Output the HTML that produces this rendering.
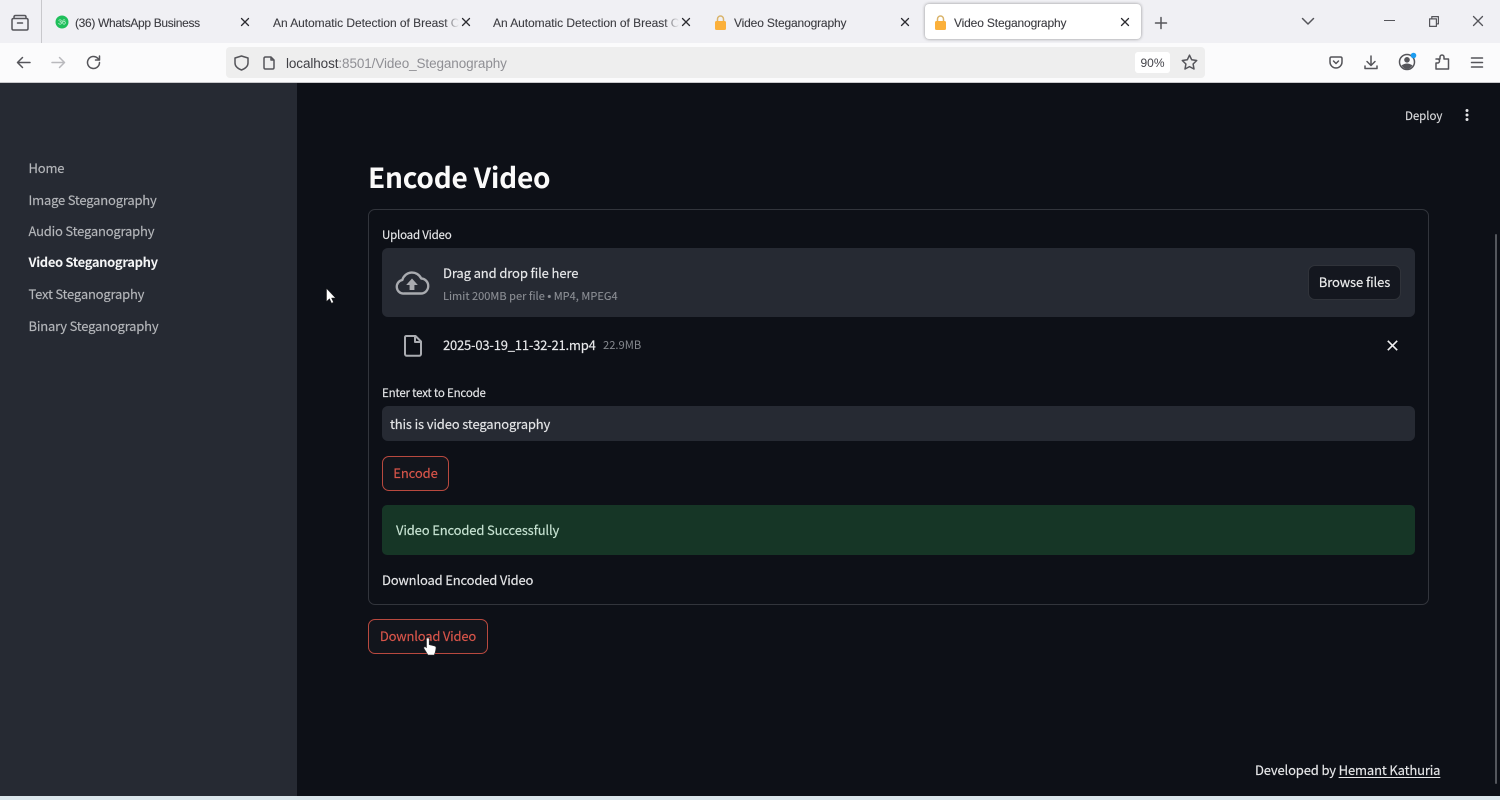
<!DOCTYPE html>
<html lang="en">
<head>
<meta charset="utf-8">
<title>Video Steganography</title>
<style>
html,body{margin:0;padding:0;width:1500px;height:800px;overflow:hidden;background:#0d1017}
body{position:relative;font-family:"Noto Sans CJK SC","Liberation Sans",sans-serif}
#w{position:absolute;left:0;top:0;width:1500px;height:800px;overflow:hidden;filter:blur(.3px)}
.a{position:absolute;white-space:nowrap}
.t{height:20px;line-height:20px}
.s{font-size:13px;letter-spacing:-.15px;-webkit-text-stroke:.15px currentColor}
.l{font-size:11.5px;letter-spacing:-.2px;-webkit-text-stroke:.15px currentColor}
.b{font-family:"Liberation Sans",sans-serif;font-size:12px;color:#3b3b40;top:13px;-webkit-text-stroke:.1px currentColor}
svg{position:absolute;overflow:visible}
.nav{left:28.500px;font-size:13px;letter-spacing:-.2px;color:#b4b6ba;-webkit-text-stroke:.15px currentColor}
.i{fill:none;stroke:#55555a;stroke-width:1.500;stroke-linecap:round;stroke-linejoin:round}
.x{fill:none;stroke:#2b2b30;stroke-width:1.300;stroke-linecap:round}
.btn{box-sizing:border-box;background:#12151c;border:1px solid #b8493f;border-radius:7px;text-align:center;line-height:32px;color:#d8554a}
</style>
</head>
<body>
<div id="w">
<!-- browser chrome -->
<div class="a" style="left:0;top:0;width:1500px;height:43px;background:#f0f0f4"></div>
<div class="a" style="left:0;top:43px;width:1500px;height:39px;background:#fbfbfc"></div>
<div class="a" style="left:0;top:82px;width:1500px;height:1px;background:#c9c9cc"></div>
<div class="a" style="left:41px;top:0;width:1px;height:43px;background:#c8c8cc"></div>

<svg style="left:11px;top:14px" width="18" height="18" viewBox="0 0 18 18"><path class="i" d="M3 4.500V3q0-1.500 1.500-1.500h9Q15 1.500 15 3v1.500M2.500 4.500h13Q17 4.500 17 6v8.500q0 1.500-1.500 1.500h-13Q1 16 1 14.500V6q0-1.500 1.500-1.500zM6.500 9h5"/></svg>

<svg style="left:55px;top:15px" width="14" height="14" viewBox="0 0 14 14"><circle cx="7" cy="7" r="6.500" fill="#1fbf5b"/><text x="7" y="9.500" font-size="7" text-anchor="middle" fill="#dff8e8" font-family="Liberation Sans">36</text></svg>
<div class="a t b" style="left:75px;letter-spacing:-.33px">(36) WhatsApp Business</div>
<svg style="left:241px;top:18px" width="8" height="8" viewBox="0 0 8 8"><path class="x" d="M.5.500l7 7M7.500.500l-7 7"/></svg>

<div class="a t b" style="left:273px;letter-spacing:-.05px;width:186px;overflow:hidden;-webkit-mask-image:linear-gradient(90deg,#000 92%,transparent)">An Automatic Detection of Breast Cancer</div>
<svg style="left:462px;top:18px" width="8" height="8" viewBox="0 0 8 8"><path class="x" d="M.5.500l7 7M7.500.500l-7 7"/></svg>

<div class="a t b" style="left:493px;letter-spacing:-.05px;width:186px;overflow:hidden;-webkit-mask-image:linear-gradient(90deg,#000 92%,transparent)">An Automatic Detection of Breast Cancer</div>
<svg style="left:682px;top:18px" width="8" height="8" viewBox="0 0 8 8"><path class="x" d="M.5.500l7 7M7.500.500l-7 7"/></svg>

<svg style="left:714px;top:15px" width="13" height="15" viewBox="0 0 13 15"><path d="M3.500 7V4a3 3 0 0 1 6 0v3" fill="none" stroke="#d9b36a" stroke-width="1.500"/><rect x="1" y="6" width="11" height="9" rx="1.500" fill="#fbb03b"/></svg>
<div class="a t b" style="left:734px;letter-spacing:-.15px">Video Steganography</div>
<svg style="left:901px;top:18px" width="8" height="8" viewBox="0 0 8 8"><path class="x" d="M.5.500l7 7M7.500.500l-7 7"/></svg>

<div class="a" style="left:925px;top:4px;width:216px;height:35px;background:#fff;border-radius:4px;box-shadow:0 0 3px rgba(0,0,0,.4)"></div>
<svg style="left:934px;top:15px" width="13" height="15" viewBox="0 0 13 15"><path d="M3.500 7V4a3 3 0 0 1 6 0v3" fill="none" stroke="#d9b36a" stroke-width="1.500"/><rect x="1" y="6" width="11" height="9" rx="1.500" fill="#fbb03b"/></svg>
<div class="a t b" style="left:954px;letter-spacing:-.15px">Video Steganography</div>
<svg style="left:1121px;top:18px" width="8" height="8" viewBox="0 0 8 8"><path class="x" d="M.5.500l7 7M7.500.500l-7 7"/></svg>

<svg style="left:1155px;top:17px" width="12" height="12" viewBox="0 0 12 12"><path class="i" d="M6 .5v11M.5 6h11"/></svg>
<svg style="left:1302px;top:18px" width="12" height="7" viewBox="0 0 12 7"><path class="i" d="M.5.500L6 6l5.500-5.500"/></svg>
<div class="a" style="left:1384px;top:20px;width:11px;height:1px;background:#55555a"></div>
<svg style="left:1429px;top:16px" width="10" height="11" viewBox="0 0 10 11"><path class="i" style="stroke-width:1.200;stroke-linecap:butt" d="M.6 2.900h6.800v7.500H.6zM2.800 2.900V.6h6.600v7.300H7.400"/></svg>
<svg style="left:1473px;top:16px" width="10" height="10" viewBox="0 0 10 10"><path class="i" style="stroke-width:1.300" d="M.5.500l9 9M9.500.500l-9 9"/></svg>

<!-- toolbar -->
<svg style="left:16px;top:56px" width="15" height="13" viewBox="0 0 15 13"><path class="i" d="M14 6.500H1.500M6.500 1.500l-5 5 5 5"/></svg>
<svg style="left:51px;top:56px" width="15" height="13" viewBox="0 0 15 13"><path class="i" style="stroke:#b9b9bd" d="M1 6.500h12.500M8.500 1.500l5 5-5 5"/></svg>
<svg style="left:86px;top:55px" width="15" height="15" viewBox="0 0 15 15"><path class="i" d="M13.500 7.500a6 6 0 1 1-1.800-4.300l1.800 1.800M13.500 1v4h-4"/></svg>

<div class="a" style="left:226px;top:47px;width:979px;height:31px;background:#eeeeee;border-radius:4px"></div>
<svg style="left:234px;top:55px" width="15" height="16" viewBox="0 0 15 16"><path class="i" d="M7.500 1L1 3v5q0 4.500 6.500 7Q14 12.500 14 8V3z"/></svg>
<svg style="left:263px;top:56px" width="12" height="14" viewBox="0 0 12 14"><path class="i" d="M1 2.500Q1 1 2.500 1H8l3 3v7.500q0 1.500-1.500 1.500h-7Q1 13 1 11.500zM8 1v3h3"/></svg>
<div class="a" style="left:286px;top:54px;height:20px;line-height:20px;font-size:13.500px;letter-spacing:-.1px;font-family:'Liberation Sans',sans-serif;color:#8f8f94"><span style="color:#3f3f44">localhost</span>:8501/Video_Steganography</div>
<div class="a" style="left:1135px;top:52px;width:35px;height:21px;background:#fff;border-radius:3px;text-align:center;font:12px/23px 'Liberation Sans',sans-serif;color:#44444a">90%</div>
<svg style="left:1181px;top:54px" width="17" height="17" viewBox="0 0 17 17"><path class="i" d="M8.500 1.200l2.200 4.600 5 .7-3.600 3.500.9 5-4.500-2.400L4 15l.9-5L1.300 6.500l5-.7z"/></svg>

<svg style="left:1329px;top:56px" width="14" height="13" viewBox="0 0 14 13"><path class="i" d="M1 2.500Q1 1 2.500 1h9Q13 1 13 2.500V6A6 6 0 0 1 1 6zM4.500 5L7 7.500 9.500 5"/></svg>
<svg style="left:1364px;top:55px" width="14" height="15" viewBox="0 0 14 15"><path class="i" d="M7 1v9M3 6.500L7 10.500l4-4M1 11v2.500h12V11"/></svg>
<svg style="left:1398px;top:51px" width="20" height="20" viewBox="0 0 20 20"><circle cx="9" cy="11" r="7.500" class="i"/><circle cx="9" cy="8.800" r="2.800" fill="#55555a"/><path d="M3.500 14.500Q9 10.500 14.500 14.500 12 18 9 18T3.500 14.500z" fill="#55555a"/><circle cx="15.500" cy="4.500" r="2.800" fill="#1c9cf0"/></svg>
<svg style="left:1435px;top:54px" width="15" height="16" viewBox="0 0 15 16"><path class="i" d="M1 15V9h1.500a2 2 0 0 0 0-4H1V5h4V3a2 2 0 0 1 4 0v2h4.500v10z"/></svg>
<svg style="left:1471px;top:57px" width="12" height="11" viewBox="0 0 12 11"><path class="i" d="M.5 1h11M.5 5.500h11M.5 10h11"/></svg>

<!-- app -->
<div class="a" style="left:0;top:83px;width:297px;height:713px;background:#262a33"></div>
<div class="a" style="left:297px;top:83px;width:1203px;height:713px;background:#0d1017"></div>
<div class="a" style="left:0;top:796px;width:1500px;height:4px;background:#dbe7ec"></div>

<div class="a t nav" style="top:158px">Home</div>
<div class="a t nav" style="top:190px">Image Steganography</div>
<div class="a t nav" style="top:221px">Audio Steganography</div>
<div class="a t nav" style="top:252px;color:#f4f5f6;font-weight:700;letter-spacing:-.35px;-webkit-text-stroke:0">Video Steganography</div>
<div class="a t nav" style="top:284px">Text Steganography</div>
<div class="a t nav" style="top:316px">Binary Steganography</div>

<svg style="left:326px;top:288px" width="10" height="16" viewBox="0 0 10 16"><path d="M.5.500v13l3-2.800 2 4.500 2-.9-2-4.300h4z" fill="#fff" stroke="#222" stroke-width=".5"/></svg>

<div class="a t s" style="left:1405px;top:106px;font-size:11.500px;letter-spacing:-.05px;color:#d8d9db">Deploy</div>
<svg style="left:1464px;top:108px" width="6" height="14" viewBox="0 0 6 14"><circle cx="3" cy="2.500" r="1.500" fill="#e4e5e7"/><circle cx="3" cy="7" r="1.500" fill="#e4e5e7"/><circle cx="3" cy="11.500" r="1.500" fill="#e4e5e7"/></svg>

<div class="a" style="left:368px;top:156px;height:42px;line-height:42px;font-size:28px;letter-spacing:-.22px;font-weight:700;color:#fafafa">Encode Video</div>

<div class="a" style="left:368px;top:209px;width:1059px;height:394px;border:1px solid #32353c;border-radius:7px"></div>

<div class="a t l" style="left:382px;top:225px;color:#e6e7e9">Upload Video</div>
<div class="a" style="left:382px;top:248px;width:1033px;height:69px;background:#262a33;border-radius:6px"></div>
<svg style="left:396px;top:271px" width="32" height="24" viewBox="0 0 33 24" preserveAspectRatio="none"><path d="M9 22.500H8A6.800 6.800 0 0 1 6.500 9 10.500 10.500 0 0 1 26 7.500 7.500 7.500 0 0 1 25.500 22.500z" fill="none" stroke="#a9abb0" stroke-width="2.400" stroke-linejoin="round"/><path d="M16.500 7.500l6 6.500h-3.500v5h-5v-5h-3.500z" fill="#a9abb0"/></svg>
<div class="a t s" style="left:443px;top:263px;letter-spacing:-.12px;color:#e8e9eb">Drag and drop file here</div>
<div class="a t" style="left:443px;top:286px;font-size:11px;letter-spacing:.03px;color:#8c8f95;-webkit-text-stroke:.1px currentColor">Limit 200MB per file <span style="font-family:'Liberation Sans',sans-serif">•</span> MP4, MPEG4</div>
<div class="a s" style="left:1308px;top:265px;width:93px;height:35px;box-sizing:border-box;background:#14171f;border:1px solid #30333a;border-radius:7px;text-align:center;line-height:32px;letter-spacing:-.1px;color:#eceded">Browse files</div>

<svg style="left:404px;top:335px" width="18" height="22" viewBox="0 0 18 22"><path d="M2.500 1H11.500L17 6.500V19a1.800 1.800 0 0 1-1.800 1.800H2.800A1.800 1.800 0 0 1 1 19V2.500Q1 1 2.500 1zM11 1.500V7h5.500" fill="none" stroke="#aaacb1" stroke-width="2" stroke-linejoin="round"/></svg>
<div class="a t s" style="left:443px;top:335px;letter-spacing:-.2px;color:#e8e9eb">2025-03-19_11-32-21.mp4</div>
<div class="a t" style="left:603px;top:335px;font-size:11.200px;color:#85888e">22.9MB</div>
<svg style="left:1387px;top:340px" width="11" height="11" viewBox="0 0 11 11"><path d="M.8.800l9.400 9.400M10.200.800L.8 10.200" fill="none" stroke="#f0f0f2" stroke-width="1.600"/></svg>

<div class="a t l" style="left:382px;top:383px;color:#e6e7e9">Enter text to Encode</div>
<div class="a" style="left:382px;top:406px;width:1033px;height:35px;background:#262a33;border-radius:6px"></div>
<div class="a t s" style="left:390px;top:414px;color:#e4e5e7">this is video steganography</div>

<div class="a btn s" style="left:382px;top:456px;width:67px;height:35px;letter-spacing:-.1px">Encode</div>

<div class="a" style="left:382px;top:505px;width:1033px;height:50px;background:#163626;border-radius:5px"></div>
<div class="a t s" style="left:396px;top:520px;color:#c7e3d2">Video Encoded Successfully</div>

<div class="a t s" style="left:382px;top:570px;letter-spacing:-.17px;color:#e4e5e7">Download Encoded Video</div>

<div class="a btn s" style="left:368px;top:619px;width:120px;height:35px;letter-spacing:-.2px">Download Video</div>
<svg style="left:423px;top:637px" width="14" height="19" viewBox="0 0 14 19"><path d="M3.500 1.500q1.500-1.200 2.700 0v6.200l5.300 1.300q1.800.5 1.500 2.300l-.8 4.200-1 2.500H5L1 11.500q-.6-1.800 1.200-1.800l1.300 1z" fill="#fff" stroke="#333" stroke-width=".6"/></svg>

<div class="a t s" style="left:1255px;top:760px;color:#e6e7e9">Developed by <span style="text-decoration:underline;text-underline-offset:2px">Hemant Kathuria</span></div>

<div class="a" style="left:1495px;top:234px;width:2px;height:550px;background:#54575d;border-radius:1px"></div>
</div>
</body>
</html>
